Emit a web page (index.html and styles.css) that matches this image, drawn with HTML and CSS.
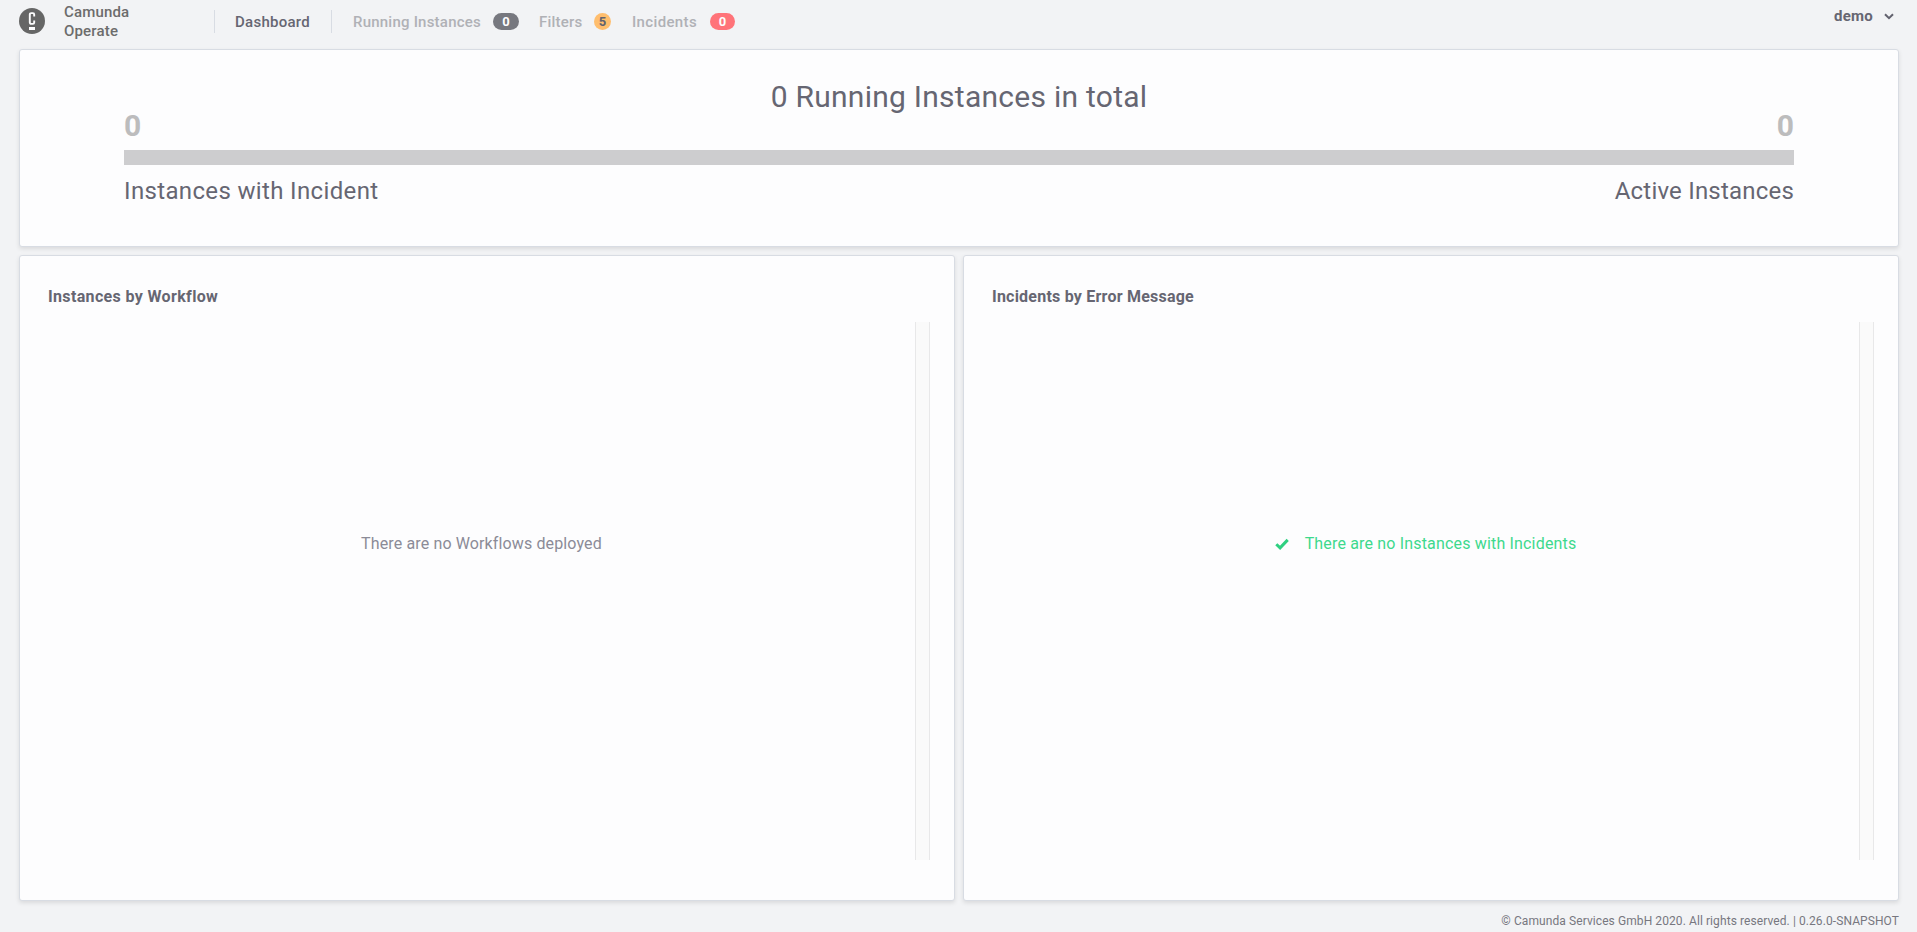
FILE: index.html
```html
<!DOCTYPE html>
<html lang="en">
<head>
<meta charset="utf-8">
<title>Camunda Operate: Dashboard</title>
<link rel="stylesheet" href="styles.css">
</head>
<body>
<header class="header">
  <a class="brand">
    <svg class="logo" viewBox="0 0 26 26"><circle cx="13" cy="13" r="13" fill="#666"/><path d="M15.2 8.6V6.4a1.3 1.3 0 0 0-1.3-1.3h-1.8a1.3 1.3 0 0 0-1.3 1.3v8.2a1.3 1.3 0 0 0 1.3 1.3h1.8a1.3 1.3 0 0 0 1.3-1.3v-2.1" fill="none" stroke="#fdfdfe" stroke-width="1.9"/><path d="M10 19h6v3h-6z" fill="#fdfdfe"/></svg>
    <span class="brand-name"><span class="camunda">Camunda</span><br><span class="operate">Operate</span></span>
  </a>
  <nav class="nav">
    <a class="nav-dashboard"><span class="t-dashboard">Dashboard</span></a>
    <a class="nav-item item-running"><span class="t-running">Running Instances</span></a><span class="badge badge-running">0</span>
    <a class="nav-item item-filters"><span class="t-filters">Filters</span></a><span class="badge badge-filters">5</span>
    <a class="nav-item item-incidents"><span class="t-incidents">Incidents</span></a><span class="badge badge-incidents">0</span>
  </nav>
  <div class="user"><span class="t-demo">demo</span>
    <svg class="chevron" viewBox="0 0 10 7"><path d="M1 1.2l4 4 4-4" fill="none" stroke="#62626e" stroke-width="2"/></svg>
  </div>
</header>
<main class="main">
  <section class="card metrics">
    <h1 class="total"><span class="t-total">0 Running Instances in total</span></h1>
    <div class="row counts"><span>0</span><span>0</span></div>
    <div class="bar"></div>
    <div class="row labels"><span class="t-with">Instances with Incident</span><span class="t-active">Active Instances</span></div>
  </section>
  <section class="card tile">
    <h2 class="tile-title"><span class="t-workflow">Instances by Workflow</span></h2>
    <div class="scroller"><div class="empty"><span class="t-none">There are no Workflows deployed</span></div><div class="track"></div></div>
  </section>
  <section class="card tile">
    <h2 class="tile-title"><span class="t-error">Incidents by Error Message</span></h2>
    <div class="scroller"><div class="empty success"><svg class="check" viewBox="0 0 14 12"><path d="M1.3 6.2l3.8 3.7 7.6-8" fill="none" stroke="#2fd081" stroke-width="3"/></svg><span class="t-ok">There are no Instances with Incidents</span></div><div class="track"></div></div>
  </section>
</main>
<footer class="footer"><span class="t-copy">© Camunda Services GmbH 2020. All rights reserved. | 0.26.0-SNAPSHOT</span></footer>
</body>
</html>
```
FILE: styles.css
```css
* { box-sizing: border-box; }
body {
  margin: 0;
  height: 932px;
  display: flex;
  flex-direction: column;
  overflow: hidden;
  background: #f2f3f5;
  color: #666672;
  font-family: Roboto, "Noto Sans", sans-serif;
}
span { white-space: nowrap; }
.header { height: 49px; display: flex; align-items: flex-start; padding: 0 19px; font-size: 15px; font-weight: 500; }
.brand { display: flex; width: 195px; }
.logo { width: 26px; height: 26px; margin-top: 8px; }
.brand-name { margin: 3px 0 0 19px; line-height: 19px; color: #6c6c6c; letter-spacing: .17px; }
.nav { display: flex; align-items: center; margin-top: 9px; height: 24px; }
.nav-dashboard { width: 118px; height: 23px; line-height: 25px; padding-left: 20px; border-left: 1px solid #d8dce3; border-right: 1px solid #d8dce3; letter-spacing: .27px; }
.nav-item { line-height: 25px; padding-top: 2px; color: #b0b1b6; letter-spacing: .22px; }
.item-running { width: 161px; padding-left: 21px; }
.item-filters { width: 75px; padding-left: 20px; }
.item-incidents { width: 99px; padding-left: 21px; letter-spacing: .35px; }
.badge { height: 17px; border-radius: 9px; margin-top: 1px; text-align: center; font-size: 13px; font-weight: 700; line-height: 17px; color: #fdfdfe; }
.badge-running { width: 26px; background: #77787f; }
.badge-filters { width: 17px; background: #ffbe6e; color: #62626e; }
.badge-incidents { width: 25px; background: #ff7379; }
.user { display: flex; align-items: center; margin-left: auto; width: 65px; height: 32px; font-weight: 700; letter-spacing: .2px; }
.t-demo { width: 50px; margin-left: 1px; }
.chevron { width: 10px; height: 7px; }
.main { display: grid; grid-template-columns: 1fr 1fr; grid-template-rows: 198px 646px; gap: 8px; padding: 0 18px 0 19px; }
.card { background: #fdfdfe; border: 1px solid #d8dce3; border-radius: 3px; box-shadow: 0 2px 4px rgba(0, 0, 0, .1); }
.metrics { grid-column: 1 / 3; padding: 27px 104px 0; }
.total { margin: 0; height: 39px; line-height: 40px; font-size: 30px; font-weight: 400; text-align: center; letter-spacing: .26px; }
.row { display: flex; justify-content: space-between; }
.counts { height: 34px; line-height: 20px; font-size: 30px; font-weight: 700; color: #bcbcbd; }
.bar { height: 15px; background: #cdcdcf; }
.labels { line-height: 53px; font-size: 24px; }
.t-with { letter-spacing: .35px; }
.t-active { letter-spacing: .2px; }
.tile { padding: 27px 24px 0 28px; }
.tile-title { margin: 0; height: 39px; line-height: 28px; font-size: 16px; font-weight: 700; }
.t-workflow { letter-spacing: .35px; }
.t-error { letter-spacing: .22px; }
.scroller { display: flex; height: 538px; }
.empty { flex: 1; display: flex; align-items: center; justify-content: center; padding-bottom: 95px; font-size: 16px; color: #8b8b97; letter-spacing: .13px; }
.success { color: #3dd98d; letter-spacing: .17px; }
.check { width: 14px; height: 12px; margin-right: 16px; }
.track { width: 15px; border: 1px solid #e8e8e9; border-width: 0 1px; background: #fafafa; }
.footer { padding: 10px 18px 0; text-align: right; font-size: 12px; line-height: 20px; color: #77777f; letter-spacing: .085px; }
```
